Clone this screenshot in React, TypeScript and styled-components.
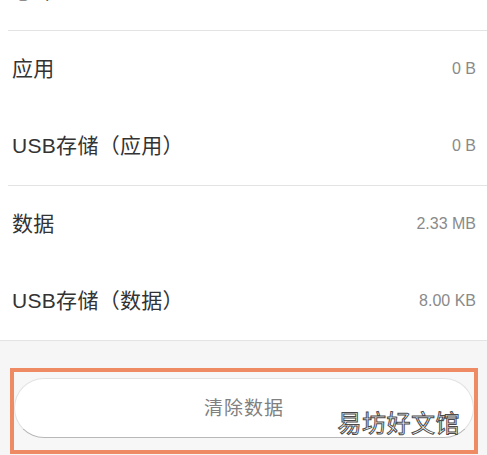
import * as React from 'react';
import styled, { createGlobalStyle } from 'styled-components';

type Item = {
  label: string;
  size: string;
};

const groups: Item[][] = [
  [
    { label: '应用', size: '0 B' },
    { label: 'USB存储（应用）', size: '0 B' },
  ],
  [
    { label: '数据', size: '2.33 MB' },
    { label: 'USB存储（数据）', size: '8.00 KB' },
  ],
];

export default function App() {
  return (
    <>
      <GlobalStyle />
      <Page>
        <List>
          <Group>
            <Row>
              <Label>总计</Label>
            </Row>
          </Group>
          {groups.map((group, key) => (
            <Group key={key} last={key === groups.length - 1}>
              {group.map((item) => (
                <Row key={item.label}>
                  <Label>{item.label}</Label>
                  <Size>{item.size}</Size>
                </Row>
              ))}
            </Group>
          ))}
        </List>
        <Footer>
          <Highlight>
            <ClearButton>清除数据</ClearButton>
            <Watermark>易坊好文馆</Watermark>
          </Highlight>
        </Footer>
      </Page>
    </>
  );
}

const GlobalStyle = createGlobalStyle`
  html, body {
    margin: 0;
    padding: 0;
    background: #ffffff;
    overflow: hidden;
  }
  body {
    font-family: "Noto Sans CJK SC", "Noto Sans", sans-serif;
  }
`;

const Page = styled.div`
  width: 487px;
  height: 455px;
  overflow: hidden;
  display: flex;
  flex-direction: column;
  background: #f6f6f6;
`;

const List = styled.div`
  margin-top: -47px;
  background: #ffffff;
  border-bottom: 1px solid #e4e4e4;
`;

const Group = styled.div<{ last?: boolean }>`
  margin-left: ${(p) => (p.last ? '0' : '8px')};
  border-bottom: ${(p) => (p.last ? 'none' : '1px solid #e3e3e3')};
  padding-left: ${(p) => (p.last ? '8px' : '0')};
`;

const Row = styled.div`
  height: 77px;
  box-sizing: border-box;
  display: flex;
  align-items: center;
  justify-content: space-between;
  padding: 0 11px 5px 4px;
`;

const Label = styled.span`
  font-family: "Liberation Sans", "Noto Sans CJK SC", sans-serif;
  font-size: 21px;
  color: #333333;
  letter-spacing: 0.3px;
`;

const Size = styled.span`
  font-family: "Liberation Sans", Arial, sans-serif;
  font-size: 16px;
  color: #8a8a8a;
  padding-top: 3px;
`;

const Footer = styled.div`
  padding: 27px 9px 0 10px;
`;

const Highlight = styled.div`
  position: relative;
  height: 86px;
  border: 4px solid #ee8a64;
  box-sizing: border-box;
  padding: 6px 0 0 0;
  background: #f7f7f7;
`;

const ClearButton = styled.div`
  height: 60px;
  background: #ffffff;
  border-radius: 30px;
  border: 1px solid #e2e2e2;
  border-bottom-color: #b8b8b8;
  box-sizing: border-box;
  display: flex;
  align-items: center;
  justify-content: center;
  padding-bottom: 3px;
  font-size: 19px;
  color: #808080;
  letter-spacing: 1px;
`;

const Watermark = styled.span`
  position: absolute;
  right: 14px;
  bottom: 11px;
  font-size: 24px;
  color: #ffffff;
  -webkit-text-stroke: 1px #4a4a4a;
  letter-spacing: 0.5px;
`;
